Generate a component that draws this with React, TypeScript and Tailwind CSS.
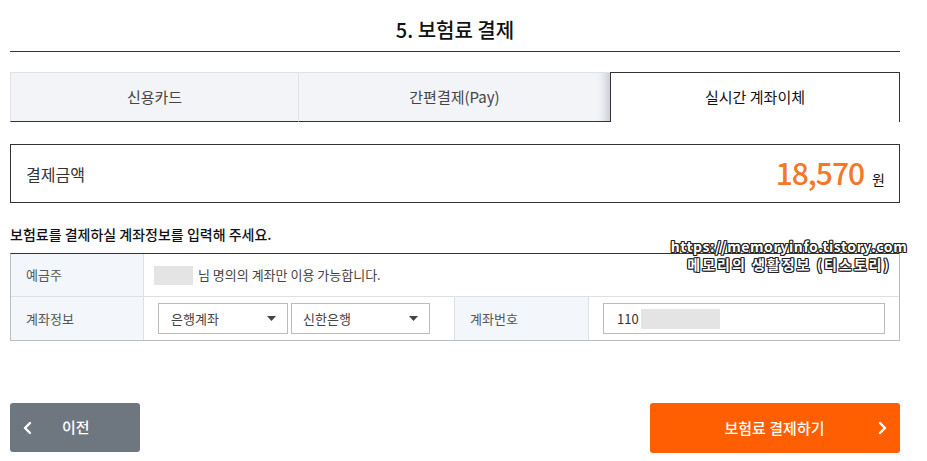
import React from 'react';

const font = { fontFamily: '"Noto Sans CJK KR", "Noto Sans", sans-serif' };

const Caret: React.FC = () => (
    <svg width="9" height="5" viewBox="0 0 9 5" className="shrink-0">
        <path d="M0 0h9L4.5 5z" fill="#444" />
    </svg>
);

const Chevron: React.FC<{ dir: 'left' | 'right' }> = ({ dir }) => (
    <svg width="9" height="14" viewBox="0 0 9 14" fill="none">
        <path
            d={dir === 'left' ? 'M7 2L2 7l5 5' : 'M2 2l5 5-5 5'}
            stroke="#fff"
            strokeWidth="2.4"
            strokeLinecap="round"
            strokeLinejoin="round"
        />
    </svg>
);

const App: React.FC = () => {
    const outline =
        '-1px -1px 0 #222, 1px -1px 0 #222, -1px 1px 0 #222, 1px 1px 0 #222, 0 -1px 0 #222, 0 1px 0 #222, -1px 0 0 #222, 1px 0 0 #222';

    return (
        <div className="relative w-[927px] h-[461px] bg-white text-[#222]" style={font}>
            <div className="ml-[10px] w-[890px]">
                {/* Title */}
                <div className="pt-[18px] pb-[9px] text-center text-[20px] leading-[24px] font-medium text-[#111] border-b border-[#333]">
                    5. 보험료 결제
                </div>

                {/* Tabs */}
                <div className="mt-[20px] flex h-[50px] text-[15px]">
                    <div className="w-[288px] flex items-center justify-center bg-[#f2f4f8] border-t border-l border-[#dfe3e9] border-b border-b-[#333] text-[#444]">
                        신용카드
                    </div>
                    <div className="w-[312px] flex items-center justify-center bg-[#f2f4f8] border-t border-l border-[#dfe3e9] border-b border-b-[#333] text-[#444] shadow-[inset_-14px_0_10px_-10px_rgba(40,50,70,0.22)]">
                        간편결제(Pay)
                    </div>
                    <div className="w-[290px] flex items-center justify-center bg-white border-t border-l border-r border-[#333] text-[#111]">
                        실시간 계좌이체
                    </div>
                </div>

                {/* Amount */}
                <div className="mt-[22px] h-[59px] border border-[#333] flex items-center justify-between pl-[15px] pr-[14px]">
                    <span className="text-[16px] text-[#333]">결제금액</span>
                    <div className="flex items-baseline gap-[8px]">
                        <span className="text-[30px] leading-none font-medium text-[#f2782a] tracking-[-1px]">18,570</span>
                        <span className="text-[14px] text-[#111]">원</span>
                    </div>
                </div>

                <p className="mt-[21px] text-[14px] leading-[20px] font-medium text-[#111]">
                    보험료를 결제하실 계좌정보를 입력해 주세요.
                </p>

                {/* Account table */}
                <div className="mt-[9px] border-t border-t-[#333] border-l border-r border-b border-[#b9bcc2] text-[13px] text-[#444]">
                    <div className="flex h-[43px] border-b border-[#dde1e7]">
                        <div className="w-[133px] shrink-0 flex items-center pl-[15px] bg-[#f3f6fa] border-r border-[#dde1e7] text-[#555]">
                            예금주
                        </div>
                        <div className="flex items-center pl-[10px] gap-[5px]">
                            <span className="w-[39px] h-[19px] bg-[#e4e4e4]" />
                            <span>님 명의의 계좌만 이용 가능합니다.</span>
                        </div>
                    </div>
                    <div className="flex h-[43px]">
                        <div className="w-[133px] shrink-0 flex items-center pl-[15px] bg-[#f3f6fa] border-r border-[#dde1e7] text-[#555]">
                            계좌정보
                        </div>
                        <div className="w-[311px] shrink-0 flex items-center pl-[14px] gap-[3px] border-r border-[#dde1e7]">
                            <div className="w-[130px] h-[31px] border border-[#b9bcc2] flex items-center justify-between pl-[12px] pr-[11px]">
                                <span>은행계좌</span>
                                <Caret />
                            </div>
                            <div className="w-[139px] h-[31px] border border-[#b9bcc2] flex items-center justify-between pl-[11px] pr-[11px]">
                                <span>신한은행</span>
                                <Caret />
                            </div>
                        </div>
                        <div className="w-[134px] shrink-0 flex items-center pl-[15px] bg-[#f3f6fa] border-r border-[#dde1e7] text-[#555]">
                            계좌번호
                        </div>
                        <div className="flex items-center pl-[14px]">
                            <div className="w-[282px] h-[31px] border border-[#b9bcc2] flex items-center pl-[13px] gap-[2px] text-[#333]">
                                <span>110</span>
                                <span className="w-[79px] h-[20px] bg-[#e4e4e4]" />
                            </div>
                        </div>
                    </div>
                </div>

                {/* Buttons */}
                <div className="mt-[62px] flex justify-between">
                    <button className="w-[130px] h-[49px] rounded-[3px] bg-[#6e7780] flex items-center pl-[13px] text-white text-[15px] font-medium">
                        <Chevron dir="left" />
                        <span className="ml-[30px]">이전</span>
                    </button>
                    <button className="relative w-[250px] h-[50px] rounded-[3px] bg-[#ff5f00] flex items-center justify-center text-white text-[15px] font-medium">
                        <span className="-ml-[1px]">보험료 결제하기</span>
                        <span className="absolute right-[13px] top-[18px]">
                            <Chevron dir="right" />
                        </span>
                    </button>
                </div>
            </div>

            {/* Watermark */}
            <div
                className="absolute left-[664px] top-[237px] w-[250px] flex flex-col items-center text-white font-bold text-[14px] leading-[18px]"
                style={{ textShadow: outline }}
            >
                <span className="tracking-[0.6px]">https://memoryinfo.tistory.com</span>
                <span className="tracking-[2px]">메모리의 생활정보 (티스토리)</span>
            </div>
        </div>
    );
};

export default App;
